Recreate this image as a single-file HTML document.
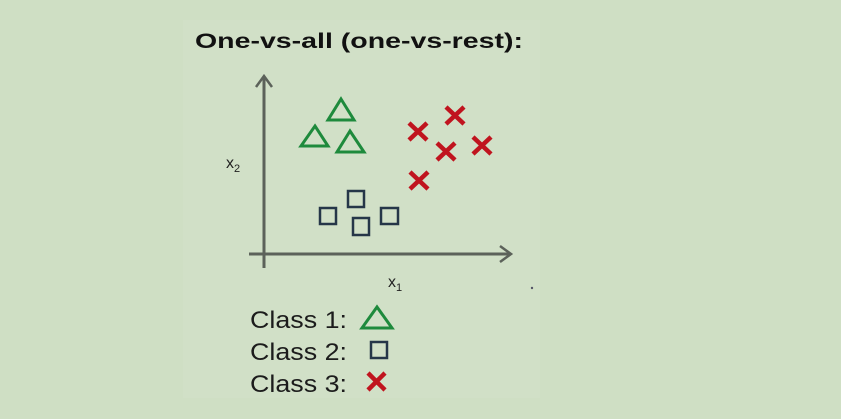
<!DOCTYPE html>
<html><head><style>
html,body{margin:0;padding:0;background:#cfdfc4;width:841px;height:419px;overflow:hidden}
svg{display:block}
</style></head><body>
<svg width="841" height="419" viewBox="0 0 841 419" xmlns="http://www.w3.org/2000/svg">
<rect width="841" height="419" fill="#cfdfc4"/>
<rect x="183" y="20" width="357" height="378" fill="#d1e0c7"/>
<text x="195" y="48" font-family="Liberation Sans, sans-serif" font-weight="bold" font-size="21" fill="#111" textLength="328" lengthAdjust="spacingAndGlyphs">One-vs-all (one-vs-rest):</text>
<g stroke="#5c625a" stroke-width="3" fill="none">
<line x1="264" y1="78" x2="264" y2="268"/>
<polyline points="256,87 264,76 272,87" stroke-width="2.5"/>
<line x1="249" y1="254" x2="510" y2="254"/>
<polyline points="500,246 511,254 500,262" stroke-width="2.5"/>
</g>
<text x="226" y="168" font-family="Liberation Sans, sans-serif" font-size="16" fill="#222">x<tspan font-size="11" dy="4">2</tspan></text>
<text x="388" y="287" font-family="Liberation Sans, sans-serif" font-size="16" fill="#222">x<tspan font-size="11" dy="4">1</tspan></text>
<g stroke="#1e8a3c" stroke-width="3" fill="none" stroke-linejoin="miter">
<polygon points="341,99 354,120 328,120"/>
<polygon points="315,126 328,146 301,146"/>
<polygon points="350,131 364,152 337,152"/>
<polygon points="377,307 392,328 362,328"/>
</g>
<g stroke="#c0141e" stroke-width="4.5" fill="none">
<path d="M409,123l18,17M427,123l-18,17"/>
<path d="M446,107l18,17M464,107l-18,17"/>
<path d="M437,143l18,17M455,143l-18,17"/>
<path d="M473,137l18,17M491,137l-18,17"/>
<path d="M410,172l18,17M428,172l-18,17"/>
<path d="M368,373l17,17M385,373l-17,17"/>
</g>
<g stroke="#253648" stroke-width="2.5" fill="none">
<rect x="320" y="208" width="16" height="16"/>
<rect x="348" y="191" width="16" height="16"/>
<rect x="353" y="218" width="16" height="17"/>
<rect x="381" y="208" width="17" height="16"/>
<rect x="371" y="342" width="16" height="16"/>
</g>
<g font-family="Liberation Sans, sans-serif" font-size="24" fill="#1c1c1c">
<text x="250" y="328" textLength="97" lengthAdjust="spacingAndGlyphs">Class 1:</text>
<text x="250" y="360" textLength="97" lengthAdjust="spacingAndGlyphs">Class 2:</text>
<text x="250" y="392" textLength="97" lengthAdjust="spacingAndGlyphs">Class 3:</text>
</g>
<circle cx="532" cy="288" r="1.2" fill="#556"/>
</svg>
</body></html>
